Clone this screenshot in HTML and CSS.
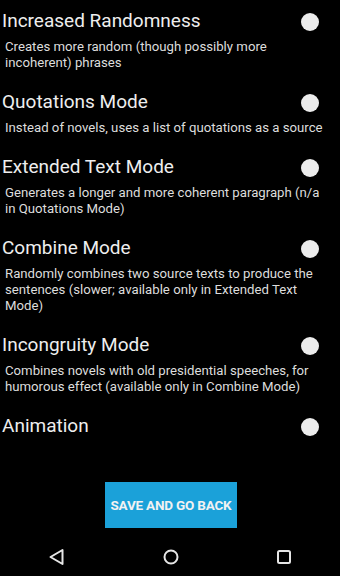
FILE: index.html
```html
<!DOCTYPE html>
<html>
    <head>
        <meta charset="utf-8">
        <title>Settings</title>
        <link rel="stylesheet" href="styles.css">
    </head>
    <body>
        <div class="screen">
            <div class="settings">
                <div class="option">
                    <div class="option-head">
                        <h3 class="option-title">Increased Randomness</h3>
                        <span class="toggle"></span>
                    </div>
                    <p class="option-desc">Creates more random (though possibly more incoherent) phrases</p>
                </div>
                <div class="option">
                    <div class="option-head">
                        <h3 class="option-title">Quotations Mode</h3>
                        <span class="toggle"></span>
                    </div>
                    <p class="option-desc">Instead of novels, uses a list of quotations as a source</p>
                </div>
                <div class="option">
                    <div class="option-head">
                        <h3 class="option-title">Extended Text Mode</h3>
                        <span class="toggle"></span>
                    </div>
                    <p class="option-desc">Generates a longer and more coherent paragraph (n/a in Quotations Mode)</p>
                </div>
                <div class="option">
                    <div class="option-head">
                        <h3 class="option-title">Combine Mode</h3>
                        <span class="toggle"></span>
                    </div>
                    <p class="option-desc">Randomly combines two source texts to produce the sentences (slower; available only in Extended Text Mode)</p>
                </div>
                <div class="option">
                    <div class="option-head">
                        <h3 class="option-title">Incongruity Mode</h3>
                        <span class="toggle"></span>
                    </div>
                    <p class="option-desc">Combines novels with old presidential speeches, for humorous effect (available only in Combine Mode)</p>
                </div>
                <div class="option">
                    <div class="option-head">
                        <h3 class="option-title">Animation</h3>
                        <span class="toggle"></span>
                    </div>
                </div>
            </div>
            <div class="actions">
                <button class="save-btn">SAVE AND GO BACK</button>
            </div>
            <div class="nav-bar">
                <svg class="nav-icon" width="18" height="18" viewBox="0 0 18 18">
                    <path d="M14.5 2 L14.5 16 L2.5 9 Z" fill="none" stroke="#e6e6e6" stroke-width="2" stroke-linejoin="round"/>
                </svg>
                <svg class="nav-icon" width="18" height="18" viewBox="0 0 18 18">
                    <circle cx="9" cy="9" r="6.5" fill="none" stroke="#e6e6e6" stroke-width="2"/>
                </svg>
                <svg class="nav-icon" width="18" height="18" viewBox="0 0 18 18">
                    <rect x="3" y="3" width="12" height="12" rx="1.5" fill="none" stroke="#e6e6e6" stroke-width="2"/>
                </svg>
            </div>
        </div>
    </body>
</html>
```

FILE: styles.css
```css
body {
    margin: 0;
    background-color: #000;
    font-family: Roboto, "Liberation Sans", sans-serif;
}
.screen {
    width: 340px;
    height: 576px;
    display: flex;
    flex-direction: column;
    overflow: hidden;
}
.settings {
    padding-top: 8px;
    flex: 1;
}
.option {
    padding-bottom: 18px;
}
.option-head {
    display: flex;
    justify-content: space-between;
    align-items: center;
    height: 24px;
}
.option-title {
    margin: 0;
    padding-left: 2px;
    font-size: 19px;
    font-weight: 400;
    color: #eeeeee;
}
.toggle {
    width: 18px;
    height: 18px;
    border-radius: 50%;
    background-color: #ececec;
    margin-right: 21px;
    margin-top: 3px;
}
.option-desc {
    margin: 7px 0 0;
    padding: 0 12px 0 5px;
    font-size: 13.2px;
    line-height: 16px;
    color: #dddddd;
}
.actions {
    display: flex;
    justify-content: center;
}
.save-btn {
    width: 132px;
    height: 46px;
    padding: 0;
    border: none;
    margin-left: 2px;
    background-color: #1ba1d9;
    color: #f2f2f2;
    font-family: Roboto, "Liberation Sans", sans-serif;
    font-size: 13.5px;
    font-weight: 700;
    letter-spacing: -0.2px;
}
.nav-bar {
    box-sizing: border-box;
    height: 48px;
    padding: 10px 47px 0 48px;
    display: flex;
    justify-content: space-between;
    align-items: center;
}
```
